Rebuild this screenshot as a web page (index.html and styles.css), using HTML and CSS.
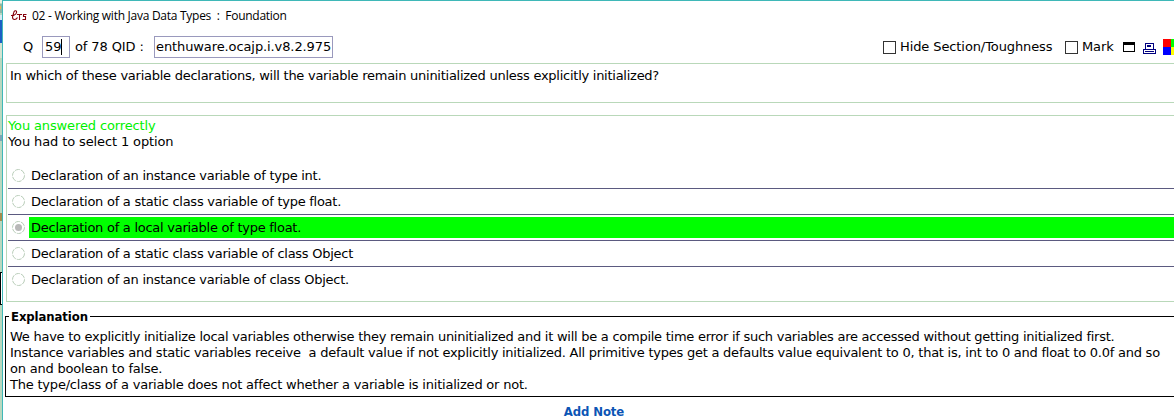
FILE: index.html
```html
<!DOCTYPE html>
<html lang="en">
<head>
<meta charset="utf-8">
<title>02 - Working with Java Data Types : Foundation</title>
<link rel="stylesheet" href="styles.css">
</head>
<body>
<div class="screen">
  <svg class="backdrop" width="2" height="420" shape-rendering="crispEdges">
    <rect width="2" height="420" fill="#b9d8bf"/>
    <rect width="2" height="3" fill="#e8efe0"/>
    <rect y="4" width="2" height="9" fill="#8fb6a8"/><rect y="6" width="1" height="3" fill="#e5b84c"/>
    <rect y="15" width="2" height="5" fill="#d6e8f4"/>
    <rect y="20" width="2" height="23" fill="#1c5fc4"/>
    <rect y="43" width="2" height="15" fill="#d5e3d2"/>
    <rect y="135" width="2" height="6" fill="#7fa5b5"/>
    <rect y="213" width="2" height="8" fill="#a68c4c"/>
    <rect y="272" width="2" height="33" fill="#fff"/>
    <rect y="272" width="1" height="33" fill="#000"/><rect y="272" width="2" height="1"/><rect y="304" width="2" height="1"/>
  </svg>
  <main class="window">
    <header class="titlebar">
      <svg class="logo" width="16" height="12" viewBox="0 0 16 12" fill="none" stroke="#85000c" stroke-width="1.1">
        <path d="M0 5.500H2.500C4.500 4.500 6 3 5.500 1.500C5 0 3 .5 2.500 3.500L1.500 7C1.500 9 2.500 9.500 3.500 9.500C5 9.500 6 8.500 6.500 7.500"/>
        <path d="M6 4.500H11M8.500 4.500V10M15.500 4.500H12.500V6.500H14.500V9.500H11.500"/>
      </svg>
      <span class="title">02 - Working with Java Data Types&nbsp; :&nbsp; Foundation</span>
    </header>
    <div class="toolbar">
      <span class="q">Q</span>
      <span class="field number">59<i class="caret"></i></span>
      <span class="of">of 78 QID :</span>
      <span class="field qid">enthuware.ocajp.i.v8.2.975</span>
      <span class="check hide"><i class="box"></i>Hide Section/Toughness</span>
      <span class="check mark"><i class="box"></i>Mark</span>
      <svg class="icon" width="52" height="18" shape-rendering="crispEdges">
        <path d="M0 4H12V14H0Z"/><path fill="#fff" d="M1 7H11V13H1Z"/>
        <g fill="#000080"><path d="M22 5H31V12H22Z"/><path d="M20 11H33V16H20Z"/></g>
        <path fill="#fff" d="M23 6H30V11H23ZM21 12H32V15H21Z"/>
        <path fill="#000080" d="M24 7H28V9H24ZM22 13H31V14H22Z"/>
        <path fill="#f00" d="M40 1H48V9H40Z"/><path fill="#00f" d="M40 9H48V17H40Z"/>
        <path fill="#0f0" d="M48 1H52V9H48Z"/><path fill="#ff0" d="M48 9H52V17H48Z"/>
      </svg>
    </div>
    <section class="question">In which of these variable declarations, will the variable remain uninitialized unless explicitly initialized?</section>
    <section class="answers">
      <p class="correct">You answered correctly</p>
      <p class="hint">You had to select 1 option</p>
      <ul class="options">
        <li class="option"><svg class="radio" width="14" height="14"><circle class="ring" cx="6.5" cy="6.5" r="6"/></svg><span class="label">Declaration of an instance variable of type int.</span></li>
        <li class="option"><svg class="radio" width="14" height="14"><circle class="ring" cx="6.5" cy="6.5" r="6"/></svg><span class="label">Declaration of a static class variable of type float.</span></li>
        <li class="option"><svg class="radio" width="14" height="14"><circle class="ring" cx="6.5" cy="6.5" r="6"/><circle class="dot" cx="6.5" cy="6.5" r="3.5"/></svg><span class="label chosen">Declaration of a local variable of type float.</span></li>
        <li class="option"><svg class="radio" width="14" height="14"><circle class="ring" cx="6.5" cy="6.5" r="6"/></svg><span class="label">Declaration of a static class variable of class Object</span></li>
        <li class="option"><svg class="radio" width="14" height="14"><circle class="ring" cx="6.5" cy="6.5" r="6"/></svg><span class="label">Declaration of an instance variable of class Object.</span></li>
      </ul>
    </section>
    <fieldset class="explanation">
      <legend class="legend">Explanation</legend>
      <p class="line">We have to explicitly initialize local variables otherwise they remain uninitialized and it will be a compile time error if such variables are accessed without getting initialized first.</p>
      <p class="line loose">Instance variables and static variables receive&nbsp; a default value if not explicitly initialized. All primitive types get a defaults value equivalent to 0, that is, int to 0 and float to 0.0f and so</p>
      <p class="line looser">on and boolean to false.</p>
      <p class="line looser">The type/class of a variable does not affect whether a variable is initialized or not.</p>
    </fieldset>
    <footer class="note">Add Note</footer>
  </main>
</div>
</body>
</html>
```
FILE: styles.css
```css
* { box-sizing: border-box; }
body { margin: 0; overflow: hidden; background: #fff; color: #000; font: 13px/16px "DejaVu Sans", sans-serif; letter-spacing: -.26px; }
p, ul { margin: 0; padding: 0; }
.screen { display: flex; width: 1174px; height: 420px; overflow: hidden; white-space: nowrap; }
.backdrop { flex: none; }
.window { flex: none; width: 1172px; height: 420px; border-top: 1px solid #3fb8b8; border-left: 1px solid #3fb8b8; overflow: hidden; }
.titlebar { display: flex; align-items: center; height: 30px; padding-left: 8px; }
.logo { margin-right: 5px; }
.title { font: 12px/16px "Open Sans", sans-serif; letter-spacing: -.27px; }
.toolbar { display: flex; align-items: center; height: 32px; padding-left: 20px; letter-spacing: -.1px; }
.toolbar > * { flex: none; }
.q { width: 19px; }
.field { display: flex; align-items: center; height: 22px; padding-left: 2px; border: 1px solid #9a99bd; }
.number { width: 28px; }
.caret { width: 1px; height: 16px; background: #000; }
.of { width: 79px; margin-left: 5px; }
.qid { width: 179px; padding-left: 1px; }
.check { display: flex; align-items: center; gap: 4px; }
.hide { width: 182px; margin-left: 550px; }
.mark { width: 58px; }
.box { flex: none; width: 13px; height: 13px; border: 1px solid #333; }
.question { height: 40px; margin-left: 3px; padding: 4px 0 0 3px; border: 1px solid #b9d8b9; border-right: 0; }
.answers { height: 187px; margin: 12px 0 0 3px; padding: 2px 0 0 1px; border: 1px solid #b9d8b9; border-right: 0; }
.correct { color: #00f000; letter-spacing: -.13px; }
.hint { letter-spacing: -.12px; }
.options { margin-top: 13px; list-style: none; }
.option { display: flex; align-items: center; height: 26px; padding: 2px 0 2px 4px; border-bottom: 1px solid #5b5a80; }
.option:last-child { border-bottom-color: transparent; }
.radio { flex: none; margin-right: 3px; }
.ring { fill: none; stroke: #b9cdb9; stroke-dasharray: 5 1; }
.dot { fill: #b8b8b8; }
.label { flex: 1; height: 21px; padding: 0 0 0 2px; line-height: 21px; }
.chosen { background: #0f0; }
.explanation { min-width: 0; height: 89px; margin: 6px 0 0 2px; padding: 4px 0 0 4px; border: 1px solid #000; border-right: 0; }
.legend { margin-left: -1px; padding: 0 2px; font-family: "DejaVu Sans Condensed", "DejaVu Sans", sans-serif; font-weight: bold; line-height: 17px; letter-spacing: -.1px; }
.loose { letter-spacing: -.24px; }
.looser { letter-spacing: -.21px; }
.note { padding-top: 7px; padding-left: 11px; color: #0b55b5; font-family: "DejaVu Sans Condensed", "DejaVu Sans", sans-serif; font-weight: bold; letter-spacing: -.1px; text-align: center; }
```
